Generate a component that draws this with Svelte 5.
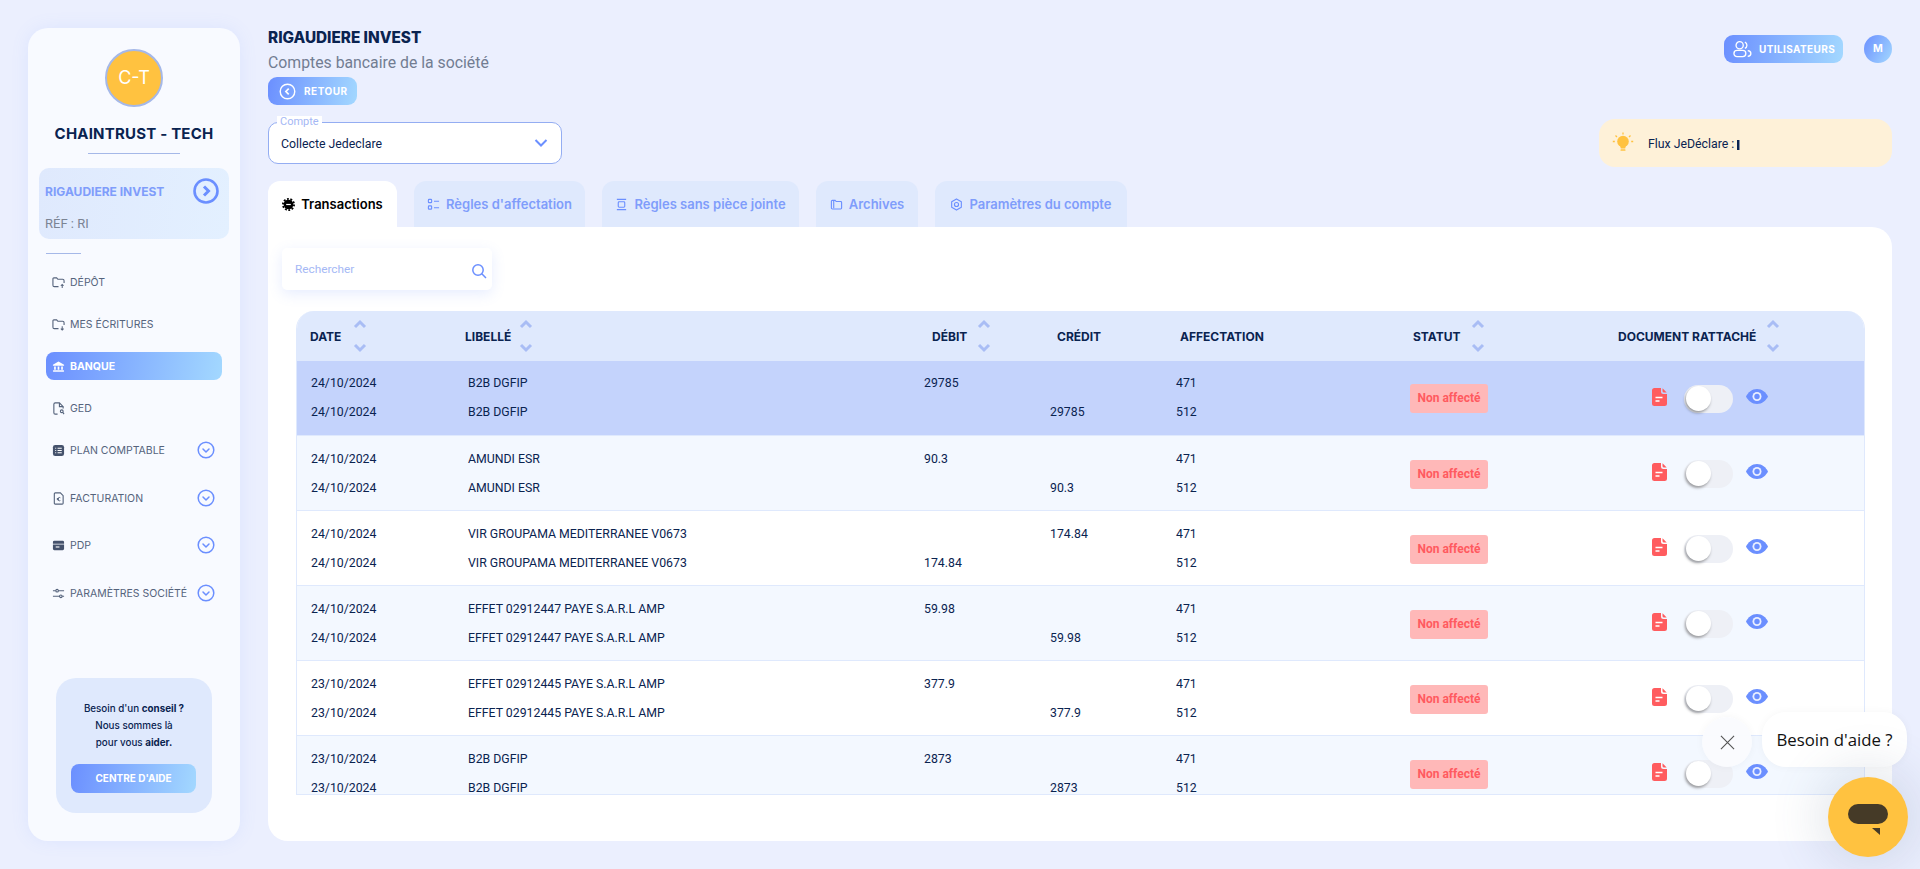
<script>
  const rows = [
    { a: ['24/10/2024', 'B2B DGFIP', '29785', '', '471'], b: ['24/10/2024', 'B2B DGFIP', '', '29785', '512'], cls: 'sel' },
    { a: ['24/10/2024', 'AMUNDI ESR', '90.3', '', '471'], b: ['24/10/2024', 'AMUNDI ESR', '', '90.3', '512'], cls: 'alt' },
    { a: ['24/10/2024', 'VIR GROUPAMA MEDITERRANEE V0673', '', '174.84', '471'], b: ['24/10/2024', 'VIR GROUPAMA MEDITERRANEE V0673', '174.84', '', '512'], cls: '' },
    { a: ['24/10/2024', 'EFFET 02912447 PAYE S.A.R.L AMP', '59.98', '', '471'], b: ['24/10/2024', 'EFFET 02912447 PAYE S.A.R.L AMP', '', '59.98', '512'], cls: 'alt' },
    { a: ['23/10/2024', 'EFFET 02912445 PAYE S.A.R.L AMP', '377.9', '', '471'], b: ['23/10/2024', 'EFFET 02912445 PAYE S.A.R.L AMP', '', '377.9', '512'], cls: '' },
    { a: ['23/10/2024', 'B2B DGFIP', '2873', '', '471'], b: ['23/10/2024', 'B2B DGFIP', '', '2873', '512'], cls: 'alt' }
  ];
</script>

{#snippet chevDown()}
  <svg class="chev" viewBox="0 0 18 18" fill="none" stroke="#6b8fff" stroke-width="1.5"><circle cx="9" cy="9" r="7.8"/><path d="M6 8l3 3 3-3" stroke-linecap="round" stroke-linejoin="round"/></svg>
{/snippet}

{#snippet sort()}
  <svg class="sort" viewBox="0 0 14 34" fill="none" stroke="#a9bdf5" stroke-width="3"><path d="M2 8l5-5 5 5"/><path d="M2 26l5 5 5-5"/></svg>
{/snippet}

<div class="app">
  <aside class="sidebar">
    <div class="avatar">C-T</div>
    <h2 class="brand">CHAINTRUST - TECH</h2>
    <div class="rule"></div>
    <div class="company">
      <div class="company-top">
        <span class="company-name">RIGAUDIERE INVEST</span>
        <svg class="company-go" viewBox="0 0 26 26" fill="none" stroke="#6b8fff" stroke-width="2.6"><circle cx="13" cy="13" r="11.5"/><path d="M11 8.5l4.5 4.5-4.5 4.5" stroke-width="3"/></svg>
      </div>
      <div class="company-ref">RÉF : RI</div>
    </div>
    <div class="short"></div>
    <nav class="nav">
      <div class="item">
        <svg viewBox="0 0 14 14" fill="none" stroke="#55637c" stroke-width="1.2"><path d="M7 11.5H2.500A1.500 1.500 0 0 1 1 10V3a1 1 0 0 1 1-1h3l1.300 1.500H11.500A1.500 1.500 0 0 1 13 5v2.500"/><path d="M11 9v4M9.500 10.500L11 9l1.500 1.500" stroke-width="1.100"/></svg>
        <span>DÉPÔT</span>
      </div>
      <div class="item">
        <svg viewBox="0 0 14 14" fill="none" stroke="#55637c" stroke-width="1.2"><path d="M7 11.500H2.500A1.500 1.500 0 0 1 1 10V3a1 1 0 0 1 1-1h3l1.300 1.500H11.500A1.500 1.500 0 0 1 13 5v2.500"/><path d="M11 9v4M9.500 11.500L11 13l1.500-1.500" stroke-width="1.100"/></svg>
        <span>MES ÉCRITURES</span>
      </div>
      <div class="item active">
        <svg viewBox="0 0 14 14" fill="#fff"><path d="M7 1.500L13 5v1.300H1V5z"/><rect x="2.300" y="7" width="1.800" height="3.500"/><rect x="6.100" y="7" width="1.800" height="3.500"/><rect x="9.900" y="7" width="1.800" height="3.500"/><rect x="1" y="11" width="12" height="1.700" rx=".5"/></svg>
        <span>BANQUE</span>
      </div>
      <div class="item">
        <svg viewBox="0 0 14 14" fill="none" stroke="#55637c" stroke-width="1.2"><path d="M6 13H3.500A1.500 1.500 0 0 1 2 11.500v-9A1.500 1.500 0 0 1 3.500 1H8l4 4v2"/><path d="M8 1v4h4"/><circle cx="10.500" cy="10" r="1.500"/><path d="M11.600 11.200L13 13"/></svg>
        <span>GED</span>
      </div>
      <div class="item tall">
        <svg viewBox="0 0 14 14"><rect x="1" y="1" width="12" height="12" rx="2.500" fill="#45526c"/><path d="M3.500 4.500h1M6 4.500h4.500M3.500 7h1M6 7h4.500M3.500 9.500h1M6 9.500h4.500" stroke="#fff" stroke-width="1.100"/></svg>
        <span>PLAN COMPTABLE</span>
        {@render chevDown()}
      </div>
      <div class="item tall tight">
        <svg viewBox="0 0 14 14" fill="none" stroke="#55637c" stroke-width="1.2"><path d="M3.500 1H9l3 3v8a1 1 0 0 1-1 1H3.500a1 1 0 0 1-1-1V2a1 1 0 0 1 1-1z"/><path d="M9 9.200a1.800 1.800 0 1 1 0-3M5.200 7h2.300M5.200 8.200h2.300" stroke-width="1"/></svg>
        <span>FACTURATION</span>
        {@render chevDown()}
      </div>
      <div class="item tall">
        <svg viewBox="0 0 14 14" fill="#45526c"><path d="M1 3.500A1.500 1.500 0 0 1 2.500 2h9A1.500 1.500 0 0 1 13 3.500V5H1z"/><path d="M1 6h12v4.500a1.500 1.500 0 0 1-1.500 1.500h-9A1.500 1.500 0 0 1 1 10.500z"/><rect x="4" y="8" width="4" height="1.200" fill="#fff"/></svg>
        <span>PDP</span>
        {@render chevDown()}
      </div>
      <div class="item">
        <svg viewBox="0 0 14 14" fill="none" stroke="#55637c" stroke-width="1.200"><path d="M1 4h3M7 4h6M1 10h7M11 10h2"/><circle cx="5.500" cy="4" r="1.400"/><circle cx="9.500" cy="10" r="1.400"/></svg>
        <span>PARAMÈTRES SOCIÉTÉ</span>
        {@render chevDown()}
      </div>
    </nav>
    <div class="help">
      <p>Besoin d'un <b>conseil ?</b><br />Nous sommes là<br />pour vous <b>aider.</b></p>
      <div class="help-btn">CENTRE D'AIDE</div>
    </div>
  </aside>

  <main class="main">
    <div class="top">
      <div>
        <h1 class="title">RIGAUDIERE INVEST</h1>
        <div class="subtitle">Comptes bancaire de la société</div>
        <div class="back">
          <svg viewBox="0 0 18 18" fill="none" stroke="#fff" stroke-width="1.500"><circle cx="9" cy="9" r="7.700"/><path d="M10.300 6L7.300 9l3 3" stroke-width="1.800"/></svg>
          <span>RETOUR</span>
        </div>
      </div>
      <div class="top-right">
        <div class="users">
          <svg viewBox="0 0 20 20" fill="none" stroke="#fff" stroke-width="1.400"><circle cx="7" cy="5.500" r="3.800"/><path d="M12.500 2.200a3.600 3.600 0 0 1 0 6.600"/><rect x="1" y="11" width="12.500" height="6.500" rx="3.250"/><path d="M15.500 11.200c2 .2 3.300 1.500 3.300 3s-1.300 2.900-3.300 3.100"/></svg>
          <span>UTILISATEURS</span>
        </div>
        <div class="me">M</div>
      </div>
    </div>

    <div class="filters">
      <div class="select">
        <span class="select-label">Compte</span>
        <span class="select-value">Collecte Jedeclare</span>
        <svg viewBox="0 0 14 10" fill="none" stroke="#6b8fff" stroke-width="2"><path d="M1.500 2l5.500 5.500L12.500 2"/></svg>
      </div>
      <div class="flux">
        <svg viewBox="0 0 22 22" fill="#ffc240"><circle cx="11" cy="9.500" r="5.800"/><path d="M8 13h6l-.8 3.500H8.800z"/><rect x="8.500" y="17.300" width="5" height="1.500" rx=".6"/><path d="M11 .5v2M3.500 3.500L5 5M18.500 3.500L17 5M.8 9.500h2M19.200 9.500h2" stroke="#ffc240" stroke-width="1.300"/></svg>
        <span class="flux-text">Flux JeDéclare : </span><i class="caret"></i>
      </div>
    </div>

    <div class="tabs">
      <div class="tab on t1">
        <svg viewBox="0 0 14 14"><circle cx="7" cy="7" r="5.200" fill="#000"/><circle cx="7" cy="7" r="6" fill="none" stroke="#000" stroke-width="2" stroke-dasharray="2 1.700"/><path d="M4.500 7h5" stroke="#fff" stroke-width="1.300"/></svg>
        Transactions
      </div>
      <div class="tab t2">
        <svg viewBox="0 0 14 14" fill="none" stroke="#6b8fff" stroke-width="1.200"><rect x="1.500" y="1.500" width="3.500" height="3.500" rx=".8"/><rect x="1.500" y="8.500" width="3.500" height="3.500" rx=".8"/><path d="M7.500 3.500H13M7.500 10.500H13"/></svg>
        Règles d'affectation
      </div>
      <div class="tab t3">
        <svg viewBox="0 0 14 14" fill="none" stroke="#6b8fff" stroke-width="1.200"><path d="M2 1.500h10M2 12.500h10"/><rect x="3.500" y="4" width="7" height="6" rx="1"/></svg>
        Règles sans pièce jointe
      </div>
      <div class="tab t4">
        <svg viewBox="0 0 14 14" fill="none" stroke="#6b8fff" stroke-width="1.200"><path d="M1.500 3.500a1 1 0 0 1 1-1h3l1.200 1.300h4.800a1 1 0 0 1 1 1v6a1 1 0 0 1-1 1h-9a1 1 0 0 1-1-1z"/><path d="M4 3v8"/></svg>
        Archives
      </div>
      <div class="tab t5">
        <svg viewBox="0 0 14 14" fill="none" stroke="#6b8fff" stroke-width="1.200"><path d="M7 1l5.200 3v6L7 13l-5.200-3V4z" stroke-linejoin="round"/><circle cx="7" cy="7" r="2.200"/></svg>
        Paramètres du compte
      </div>
    </div>

    <section class="card">
      <div class="search">
        <span>Rechercher</span>
        <svg viewBox="0 0 16 16" fill="none" stroke="#6b8fff" stroke-width="1.500"><circle cx="7" cy="7" r="5.200"/><path d="M10.800 10.800L15 15"/></svg>
      </div>

      <div class="table">
        <div class="thead">
          <div class="th">DATE {@render sort()}</div>
          <div class="th">LIBELLÉ {@render sort()}</div>
          <div class="th">DÉBIT {@render sort()}</div>
          <div class="th">CRÉDIT</div>
          <div class="th">AFFECTATION</div>
          <div class="th">STATUT {@render sort()}</div>
          <div class="th">DOCUMENT RATTACHÉ {@render sort()}</div>
        </div>
        {#each rows as row}
          <div class="tr {row.cls}">
            <div class="lines">
              {#each [row.a, row.b] as line}
                <div class="line">
                  {#each line as cell}<span>{cell}</span>{/each}
                </div>
              {/each}
            </div>
            <div class="badge">Non affecté</div>
            <div class="actions">
              <svg class="file" viewBox="0 0 15 18"><path d="M2.500 0H9v3.500A2.500 2.500 0 0 0 11.500 6H15v9.500a2.500 2.500 0 0 1-2.500 2.500h-10A2.500 2.500 0 0 1 0 15.500v-13A2.500 2.500 0 0 1 2.500 0z" fill="#ff5c5f"/><path d="M10.500 .3L14.700 4.500H12a1.500 1.500 0 0 1-1.500-1.500z" fill="#ff5c5f"/><path d="M3.500 9.500h7M3.500 13h4" stroke="#fff" stroke-width="1.500"/></svg>
              <div class="toggle"><div class="knob"></div></div>
              <svg class="eye" viewBox="0 0 22 15"><path d="M11 0c5 0 9 3.500 11 7.500C20 11.500 16 15 11 15S2 11.500 0 7.500C2 3.500 6 0 11 0z" fill="#6b8fff"/><circle cx="11" cy="7.500" r="4.500" fill="#fff" fill-opacity=".85"/><circle cx="11" cy="7.500" r="2.700" fill="#6b8fff"/></svg>
            </div>
          </div>
        {/each}
      </div>
    </section>
  </main>

  <div class="chat-close">
    <svg viewBox="0 0 16 16" fill="none" stroke="#555" stroke-width="1.200"><path d="M1 1l14 14M15 1L1 15"/></svg>
  </div>
  <div class="chat-bubble">Besoin d'aide ?</div>
  <div class="chat-btn">
    <svg viewBox="0 0 40 32"><rect x="0" y="0" width="40" height="20" rx="10" fill="#453a27"/><path d="M24 24h8v7z" fill="#453a27"/></svg>
  </div>
</div>

<style>
  :global(body) {
    margin: 0;
    background: #ebeffe;
    overflow: hidden;
  }
  .app {
    display: flex;
    gap: 28px;
    height: 869px;
    box-sizing: border-box;
    padding: 28px;
    background: #ebeffe;
    font-family: Roboto, "Liberation Sans", sans-serif;
    color: #0a2350;
    position: relative;
    overflow: hidden;
  }
  h1, h2, p { margin: 0; }

  /* sidebar */
  .sidebar {
    width: 212px;
    flex: none;
    box-sizing: border-box;
    background: #f8faff;
    border-radius: 20px;
    box-shadow: 0 0 18px rgba(107, 143, 255, .1);
    display: flex;
    flex-direction: column;
    align-items: center;
    padding-top: 21px;
  }
  .avatar {
    width: 58px;
    height: 58px;
    box-sizing: border-box;
    border: 2px solid #a5b8e8;
    border-radius: 50%;
    background: #ffc240;
    color: #fff;
    font: 400 18px/54px Inter, sans-serif;
    text-align: center;
    flex: none;
  }
  .brand {
    font: 700 15px/24px Inter, sans-serif;
    color: #0a2350;
    margin-top: 15px;
    letter-spacing: .2px;
  }
  .rule {
    width: 92px;
    height: 1px;
    background: #a5b8e8;
    margin-top: 7px;
    flex: none;
  }
  .company {
    align-self: stretch;
    margin: 14px 11px 0;
    height: 71px;
    box-sizing: border-box;
    padding: 10px 10px 0 6px;
    border-radius: 10px;
    background: linear-gradient(100deg, #dfe9fd, #e3f0ff);
    flex: none;
  }
  .company-top {
    display: flex;
    align-items: center;
    justify-content: space-between;
    height: 26px;
  }
  .company-name {
    font: 700 12px Inter, sans-serif;
    color: #7f9dfb;
  }
  .company-go { width: 26px; height: 26px; }
  .company-ref {
    font-size: 13px;
    line-height: 16px;
    color: #7b8494;
    margin-top: 12px;
  }
  .short {
    align-self: flex-start;
    margin: 14px 0 0 18px;
    width: 35px;
    height: 1px;
    background: #a5b8e8;
    flex: none;
  }
  .nav {
    align-self: stretch;
    margin: 14px 0 0 18px;
    width: 176px;
    display: flex;
    flex-direction: column;
    gap: 14px;
  }
  .item {
    height: 28px;
    display: flex;
    align-items: center;
    gap: 5px;
    padding-left: 6px;
    border-radius: 8px;
    font: 400 10.500px Inter, sans-serif;
    color: #55637c;
    white-space: nowrap;
    position: relative;
  }
  .item > svg:first-child { width: 13px; height: 13px; flex: none; }
  .item.tall { margin-bottom: 6px; }
  .item.tall.tight { margin-bottom: 5px; }
  .item.active {
    background: linear-gradient(100deg, #6b8fff, #a3d8ff);
    color: #fff;
    font-weight: 700;
  }
  .chev {
    position: absolute;
    left: 150.500px;
    top: 5px;
    width: 18px;
    height: 18px;
  }
  .help {
    margin: auto 28px 28px;
    width: 156px;
    height: 135px;
    flex: none;
    box-sizing: border-box;
    background: #dfe9fd;
    border-radius: 20px;
    padding: 22px 15px 0;
    text-align: center;
  }
  .help p {
    font: 500 9.800px/17px Inter, sans-serif;
    color: #0a2350;
  }
  .help p b { font-weight: 700; }
  .help-btn {
    margin-top: 13px;
    height: 29px;
    margin-right: 1px;
    border-radius: 8px;
    background: linear-gradient(100deg, #6b8fff, #a3d8ff);
    color: #fff;
    font: 700 10px/29px Inter, sans-serif;
  }

  /* main */
  .main {
    flex: 1;
    min-width: 0;
    display: flex;
    flex-direction: column;
  }
  .top {
    display: flex;
    justify-content: space-between;
    align-items: flex-start;
    flex: none;
  }
  .title {
    font: 800 15.300px/18px Inter, sans-serif;
    color: #0a2350;
    margin-top: 1px;
  }
  .subtitle {
    margin-top: 6px;
    font-size: 15.800px;
    line-height: 20px;
    color: #727d92;
  }
  .back {
    margin-top: 4px;
    width: 89px;
    height: 28px;
    box-sizing: border-box;
    padding-left: 11px;
    border-radius: 9px;
    background: linear-gradient(100deg, #6b8fff, #a3d8ff);
    display: flex;
    align-items: center;
    gap: 8px;
    color: #fff;
    font: 700 10px Inter, sans-serif;
    letter-spacing: .5px;
  }
  .back svg { width: 17px; height: 17px; }
  .top-right {
    margin-top: 7px;
    display: flex;
    gap: 21px;
  }
  .users {
    width: 119px;
    height: 28px;
    box-sizing: border-box;
    padding-left: 9px;
    border-radius: 9px;
    background: linear-gradient(100deg, #6b8fff, #a3d8ff);
    display: flex;
    align-items: center;
    gap: 7px;
    color: #fff;
    font: 700 10px Inter, sans-serif;
    letter-spacing: .4px;
  }
  .users svg { width: 19px; height: 19px; }
  .me {
    width: 28px;
    height: 28px;
    border-radius: 50%;
    background: linear-gradient(120deg, #6b8fff, #a3d8ff);
    color: #fff;
    font: 700 10.500px/28px Inter, sans-serif;
    text-align: center;
  }
  .filters {
    margin-top: 14px;
    height: 48px;
    display: flex;
    justify-content: space-between;
    flex: none;
  }
  .select {
    margin-top: 3px;
    width: 294px;
    height: 42px;
    box-sizing: border-box;
    padding: 0 12px;
    background: #fff;
    border: 1px solid #94adf2;
    border-radius: 10px;
    display: flex;
    align-items: center;
    justify-content: space-between;
    font-size: 12.300px;
    color: #0a2350;
    position: relative;
  }
  .select-value { padding-top: 1px; }
  .select svg { width: 14px; height: 10px; margin-right: 1px; }
  .select-label {
    position: absolute;
    left: 8px;
    top: -7px;
    padding: 0 3px;
    background: #fff;
    font-size: 11px;
    line-height: 12px;
    color: #a5b8f5;
    height: 10px;
  }
  .flux {
    width: 293px;
    box-sizing: border-box;
    padding-left: 13px;
    border-radius: 16px;
    background: #fef1d8;
    display: flex;
    align-items: center;
    gap: 14px;
    font-size: 12.300px;
    color: #0a2350;
  }
  .flux-text { padding-top: 1px; }
  .flux svg { width: 22px; height: 22px; }
  .caret {
    width: 3px;
    height: 10px;
    margin: 3px 0 0 -11px;
    background: linear-gradient(90deg, #0a2350 60%, #8a93a3 60%);
  }
  .tabs {
    margin-top: 14px;
    display: flex;
    gap: 17px;
    height: 46px;
    flex: none;
  }
  .tab {
    display: flex;
    align-items: center;
    justify-content: center;
    gap: 6px;
    border-radius: 12px 12px 0 0;
    background: #dfe9fd;
    color: #7f9dfb;
    font: 600 13px Inter, sans-serif;
    white-space: nowrap;
  }
  .tab svg { width: 13px; height: 13px; }
  .tab.on {
    background: #fff;
    color: #000;
  }
  .t1 { width: 129px; }
  .t2 { width: 171px; }
  .t3 { width: 197px; }
  .t4 { width: 102px; }
  .t5 { width: 192px; }
  .card {
    flex: 1;
    min-height: 0;
    background: #fff;
    border-radius: 0 20px 20px 20px;
    padding-top: 21px;
    box-sizing: border-box;
  }
  .search {
    margin-left: 14px;
    width: 210px;
    height: 42px;
    box-sizing: border-box;
    padding: 0 5px 0 13px;
    display: flex;
    align-items: center;
    justify-content: space-between;
    border-radius: 5px;
    background: #fff;
    box-shadow: 0 4px 14px rgba(107, 143, 255, .16);
    font-size: 11.800px;
    color: #a5b8f5;
  }
  .search svg { width: 16px; height: 16px; margin-top: 4px; }
  .table {
    margin: 21px 27px 0 28px;
    height: 484px;
    box-sizing: border-box;
    border: 1px solid #dfe9fd;
    border-top: 0;
    border-radius: 18px 18px 0 0;
    overflow: hidden;
  }
  .thead {
    height: 50px;
    background: #dfe9fd;
    display: grid;
    grid-template-columns: 155px 467px 125px 123px 233px 205px 1fr;
    padding-left: 13px;
    align-items: center;
  }
  .th {
    display: flex;
    align-items: center;
    gap: 10px;
    font: 700 12px Inter, sans-serif;
    color: #0a2350;
    white-space: nowrap;
  }
  .sort { width: 14px; height: 34px; flex: none; margin-top: -1px; }
  .th:nth-child(1) .sort { margin-left: 2px; }
  .th:nth-child(2) .sort { margin-left: -2px; }
  .tr {
    height: 75px;
    box-sizing: border-box;
    border-bottom: 1px solid #dfe9fd;
    display: flex;
    align-items: center;
    background: #fff;
  }
  .tr.sel { background: #c4d3fc; }
  .tr.alt { background: #f3f8ff; }
  .lines {
    width: 1113px;
    flex: none;
    display: flex;
    flex-direction: column;
    gap: 14.500px;
    margin-top: 2px;
  }
  .tr.sel .lines { margin-top: 0; }
  .line {
    display: grid;
    grid-template-columns: 157px 456px 126px 126px 1fr;
    padding-left: 14px;
    font-size: 12.300px;
    line-height: 15px;
    color: #0a2350;
  }
  .badge {
    width: 78px;
    height: 29px;
    border-radius: 3px;
    background: #ffb8b8;
    color: #ff5a5f;
    font-size: 12px;
    font-weight: 700;
    line-height: 29px;
    text-align: center;
    flex: none;
    margin-top: 2px;
  }
  .tr.sel .badge { margin-top: 0; }
  .actions {
    margin-left: 164px;
    margin-top: 2px;
    display: flex;
    align-items: center;
  }
  .file { width: 15px; height: 18px; flex: none; margin-top: -4px; }
  .toggle {
    margin-left: 17px;
    width: 49px;
    height: 28px;
    border-radius: 14px;
    background: #eef0f6;
    position: relative;
    flex: none;
  }
  .knob {
    position: absolute;
    left: 2px;
    top: 1px;
    width: 25px;
    height: 25px;
    border-radius: 50%;
    background: #fff;
    box-shadow: -1px 2px 3px rgba(0, 0, 0, .35);
  }
  .eye { width: 22px; height: 15px; margin-left: 13px; margin-top: -6px; flex: none; }

  /* chat widget */
  .chat-close {
    position: absolute;
    left: 1702px;
    top: 717px;
    width: 50px;
    height: 50px;
    border-radius: 50%;
    background: rgba(250, 251, 254, .96);
    box-shadow: 0 0 8px rgba(0, 0, 0, .04);
    display: flex;
    align-items: center;
    justify-content: center;
  }
  .chat-close svg { width: 15px; height: 15px; }
  .chat-bubble {
    position: absolute;
    left: 1762px;
    top: 712px;
    width: 145px;
    height: 55px;
    border-radius: 24px;
    background: #fff;
    box-shadow: 0 0 8px rgba(0, 0, 0, .04);
    font: 400 16.800px/55px "Open Sans", sans-serif;
    color: #111;
    text-align: center;
    white-space: nowrap;
  }
  .chat-btn {
    position: absolute;
    left: 1828px;
    top: 777px;
    width: 80px;
    height: 80px;
    border-radius: 50%;
    background: #ffc240;
    box-shadow: 0 0 50px 10px rgba(80, 100, 130, .16);
    display: flex;
    align-items: center;
    justify-content: center;
  }
  .chat-btn svg { width: 40px; height: 32px; margin-top: 6px; }
</style>
